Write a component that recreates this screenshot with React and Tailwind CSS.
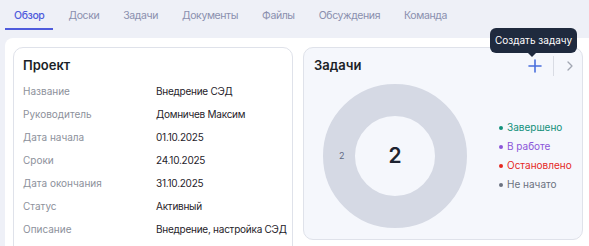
import React from 'react';

const tabs = ['Обзор', 'Доски', 'Задачи', 'Документы', 'Файлы', 'Обсуждения', 'Команда'];

const rows = [
  ['Название', 'Внедрение СЭД'],
  ['Руководитель', 'Домничев Максим'],
  ['Дата начала', '01.10.2025'],
  ['Сроки', '24.10.2025'],
  ['Дата окончания', '31.10.2025'],
  ['Статус', 'Активный'],
  ['Описание', 'Внедрение, настройка СЭД на стороне заказчика'],
];

const legend = [
  { label: 'Завершено', dot: 'bg-[#11907a]', text: 'text-[#11907a]' },
  { label: 'В работе', dot: 'bg-[#8b55d9]', text: 'text-[#8b55d9]' },
  { label: 'Остановлено', dot: 'bg-[#e5281f]', text: 'text-[#e5281f]' },
  { label: 'Не начато', dot: 'bg-[#6b7280]', text: 'text-[#6b7280]' },
];

const Donut = () => (
  <div className="relative w-[144px] h-[144px] shrink-0">
    <svg width="144" height="144" viewBox="0 0 144 144">
      <circle cx="72" cy="72" r="56" fill="none" stroke="#d5d9e4" strokeWidth="32" />
    </svg>
    <span className="absolute left-[16px] top-[65px] text-[9px] text-[#5f6a85]">2</span>
    <span className="absolute inset-0 flex items-center justify-center text-[21px] font-semibold text-[#1d2330]">2</span>
  </div>
);

export default function App() {
  return (
    <div className="w-[589px] h-[246px] overflow-hidden bg-[#eef0f7] flex flex-col relative" style={{ fontFamily: 'Inter, "Noto Sans", sans-serif' }}>
      {/* tabs */}
      <nav className="flex gap-[6px] px-[5px]">
        {tabs.map((t, i) => (
          <div
            key={t}
            className={`h-[30px] pt-1 px-[9px] flex items-center text-[10.5px] tracking-[-0.4px] border-b-2 ${i === 0 ? 'border-[#4f5bdc] text-[#4f5bdc] font-medium' : 'border-transparent text-[#8a8fae]'}`}
          >
            {t}
          </div>
        ))}
      </nav>

      {/* content */}
      <div className="mt-[8px] ml-[5px] flex-1 bg-white rounded-tl-[8px] pl-[8px] pr-[6px] pt-[9px] grid grid-cols-2 gap-[10px] items-start">
        {/* project */}
        <div className="h-[230px] border border-[#dfe2ea] rounded-[10px] bg-white px-[9px] pt-[9px]">
          <h2 className="text-[13px] leading-[16px] font-semibold text-[#1b1f27] mb-[12px]">Проект</h2>
          {rows.map(([k, v]) => (
            <div key={k} className="flex h-[23px] items-start text-[10px] leading-[13px]">
              <span className="w-[133px] shrink-0 text-[#8d919b]">{k}</span>
              <span className="text-[#1f232b] leading-[23px] -mt-[5px] w-[136px] shrink-0 tracking-[-0.25px]">{v}</span>
            </div>
          ))}
        </div>

        {/* tasks */}
        <div className="h-[193px] border border-[#dfe2ea] rounded-[10px] bg-[#f5f7fc] flex flex-col">
          <div className="h-[34px] flex items-center pl-[10px] pr-[8px] pt-[1px]">
            <h2 className="text-[13px] font-semibold text-[#1b1f27]">Задачи</h2>
            <div className="ml-auto flex items-center">
              <svg width="14" height="14" viewBox="0 0 14 14" className="mr-[11px]">
                <path d="M7 1v12M1 7h12" stroke="#4a6fdc" strokeWidth="1.6" strokeLinecap="round" />
              </svg>
              <div className="w-px h-[20px] bg-[#d9dce4] mr-[12px]" />
              <svg width="8" height="12" viewBox="0 0 8 12">
                <path d="M2 2l4 4-4 4" stroke="#a1a6b2" strokeWidth="1.3" fill="none" strokeLinecap="round" strokeLinejoin="round" />
              </svg>
            </div>
          </div>
          <div className="flex items-center pl-[19px] pt-[2px]">
            <Donut />
            <ul className="ml-[32px] flex flex-col gap-[6px]">
              {legend.map(l => (
                <li key={l.label} className={`flex items-center gap-[4px] text-[10px] leading-[13px] ${l.text}`}>
                  <span className={`w-[4px] h-[4px] rounded-full ${l.dot}`} />
                  {l.label}
                </li>
              ))}
            </ul>
          </div>
        </div>
      </div>

      {/* tooltip */}
      <div className="absolute left-[490px] top-[28px] h-[25px] w-[87px] rounded-[6px] bg-[#1f2a3e] text-white text-[10px] flex items-center justify-center">
        Создать задачу
        <span className="absolute left-[38px] -bottom-[4px] w-0 h-0 border-l-[4px] border-r-[4px] border-t-[4px] border-l-transparent border-r-transparent border-t-[#1f2a3e]" />
      </div>
    </div>
  );
}
